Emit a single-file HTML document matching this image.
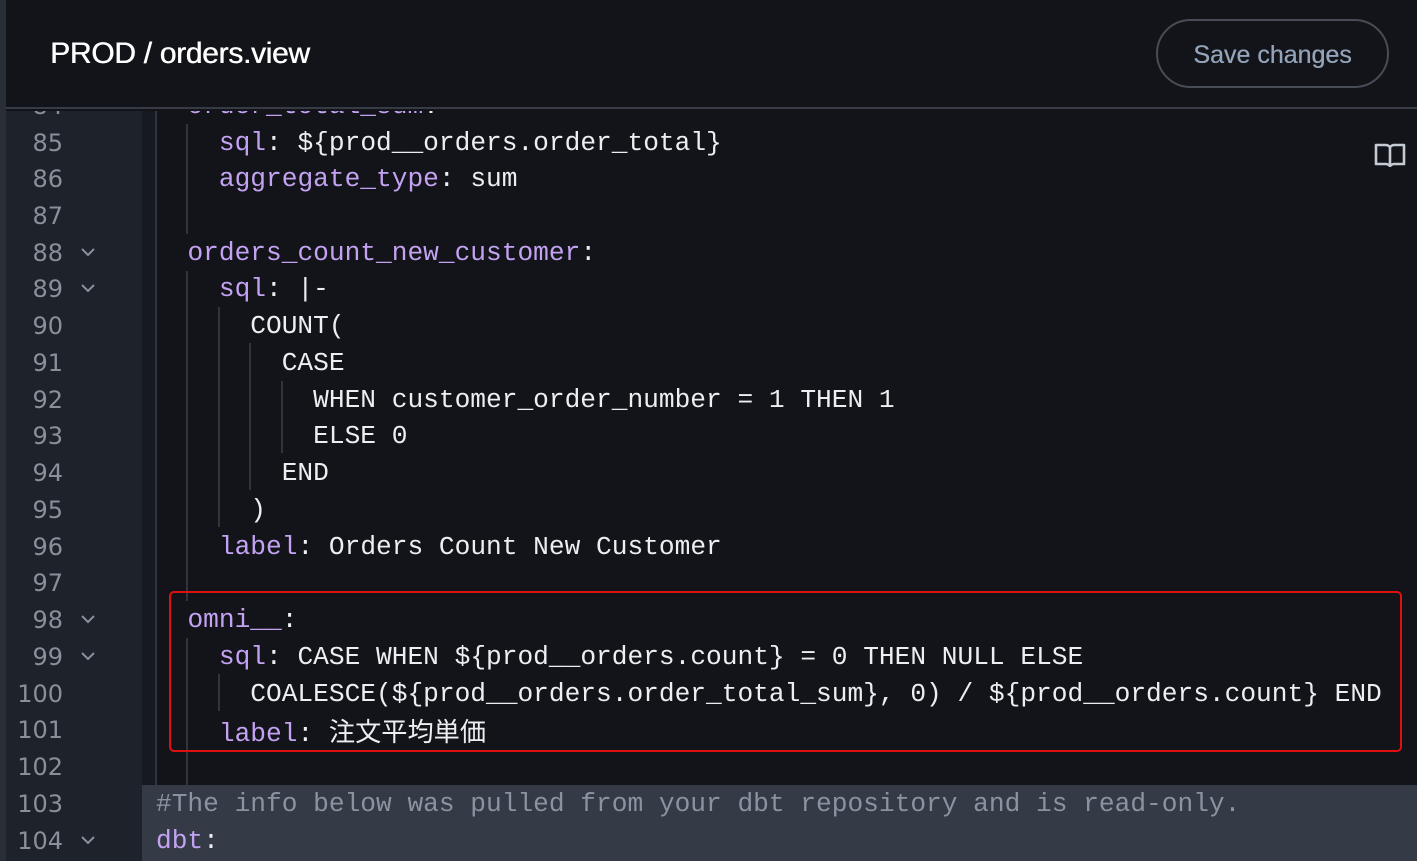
<!DOCTYPE html>
<html><head><meta charset="utf-8"><style>
*{margin:0;padding:0;box-sizing:border-box}
html,body{width:1417px;height:861px;overflow:hidden}
body{background:#121419;position:relative;font-family:"Liberation Sans",sans-serif}
.strip{position:absolute;left:0;top:0;width:6px;height:861px;background:#2a2e36}
.hdr{position:absolute;left:6px;top:0;width:1411px;height:109px;background:#121419;border-bottom:2px solid #363b45}
.title{position:absolute;left:44px;top:37px;color:#fff;font-size:30px;font-weight:normal;letter-spacing:-0.3px;text-shadow:0.5px 0 0 #fff}
.btn{position:absolute;left:1150px;top:19px;width:233px;height:69px;border:2px solid #474c57;border-radius:35px;color:#93a3b9;font-size:25px;text-align:center;line-height:69px;text-shadow:0.3px 0 0 #93a3b9}
.gut{position:absolute;left:6px;top:111px;width:136px;height:750px;background:#1e222b}
.gut2{position:absolute;left:142px;top:111px;width:13px;height:750px;background:#16191f}
.band{position:absolute;left:142px;top:785px;width:1275px;height:76px;background:#343a46}
.ln{position:absolute;left:6px;width:57px;text-align:right;color:#8a8f98;font-family:"DejaVu Sans","Liberation Sans",sans-serif;font-size:24px;height:37px;line-height:37px}
.chev{position:absolute;left:80px;width:16px;height:37px}
.code{position:absolute;left:156px;font-family:"Liberation Mono",monospace;font-size:26.2px;color:#eceef2;white-space:pre;height:37px;line-height:39px}
.k{color:#c4a2f2}
.c{color:#8b93a1}
.g{position:absolute;width:2px;background:#2f343d}
.red{position:absolute;left:169px;top:591px;width:1233px;height:161px;border:2px solid #e01010;border-radius:5px}
.clip{position:absolute;left:0;top:111px;width:1417px;height:750px;overflow:hidden}
</style></head><body>
<div class="strip"></div>
<div class="gut"></div><div class="gut2"></div>
<div class="band"></div>
<div class="clip">
<div style="position:absolute;left:0;top:-111px;width:1417px;height:861px">
<div class="g" style="left:155px;top:110px;height:675px"></div>
<div class="g" style="left:186px;top:124px;height:110px"></div>
<div class="g" style="left:186px;top:271px;height:330px"></div>
<div class="g" style="left:186px;top:638px;height:147px"></div>
<div class="g" style="left:218px;top:307px;height:220px"></div>
<div class="g" style="left:218px;top:674px;height:37px"></div>
<div class="g" style="left:249px;top:343px;height:147px"></div>
<div class="g" style="left:281px;top:381px;height:72px"></div>
<div id="lines"></div>
</div></div>
<div class="hdr"><div class="title">PROD / orders.view</div><div class="btn">Save changes</div></div>
<svg style="position:absolute;left:1374px;top:142px" width="32" height="25" viewBox="0 0 32 25"><path d="M2 3v19h10c2 0 3 1 4 2c1-1 2-2 4-2h10V3H20c-2 0-3 1-4 2c-1-1-2-2-4-2z M16 5v19" fill="none" stroke="#c5cad3" stroke-width="2.6" stroke-linejoin="round"/></svg>
<div class="red"></div>
<script>
var L=[
[84,'  <span class="k">order_total_sum</span>:',0],
[85,'    <span class="k">sql</span>: ${prod__orders.order_total}',0],
[86,'    <span class="k">aggregate_type</span>: sum',0],
[87,'',0],
[88,'  <span class="k">orders_count_new_customer</span>:',1],
[89,'    <span class="k">sql</span>: |-',1],
[90,'      COUNT(',0],
[91,'        CASE',0],
[92,'          WHEN customer_order_number = 1 THEN 1',0],
[93,'          ELSE 0',0],
[94,'        END',0],
[95,'      )',0],
[96,'    <span class="k">label</span>: Orders Count New Customer',0],
[97,'',0],
[98,'  <span class="k">omni__</span>:',1],
[99,'    <span class="k">sql</span>: CASE WHEN ${prod__orders.count} = 0 THEN NULL ELSE',1],
[100,'      COALESCE(${prod__orders.order_total_sum}, 0) / ${prod__orders.count} END',0],
[101,'    <span class="k">label</span>: <span style="font-family:\'Noto Sans CJK JP\',sans-serif">注文平均単価</span>',0],
[102,'',0],
[103,'<span class="c">#The info below was pulled from your dbt repository and is read-only.</span>',0],
[104,'<span class="k">dbt</span>:',1]];
var h='';
L.forEach(function(r){var t=142+(r[0]-85)*36.74-18.5;
h+='<div class="ln" style="top:'+(t+1)+'px">'+r[0]+'</div>';
if(r[2])h+='<svg class="chev" style="top:'+t+'px" viewBox="0 0 16 37"><path d="M2 15l6 6l6-6" fill="none" stroke="#8a8f98" stroke-width="2"/></svg>';
h+='<div class="code" style="top:'+t+'px">'+r[1]+'</div>';});
document.getElementById('lines').innerHTML=h;
</script>
</body></html>
